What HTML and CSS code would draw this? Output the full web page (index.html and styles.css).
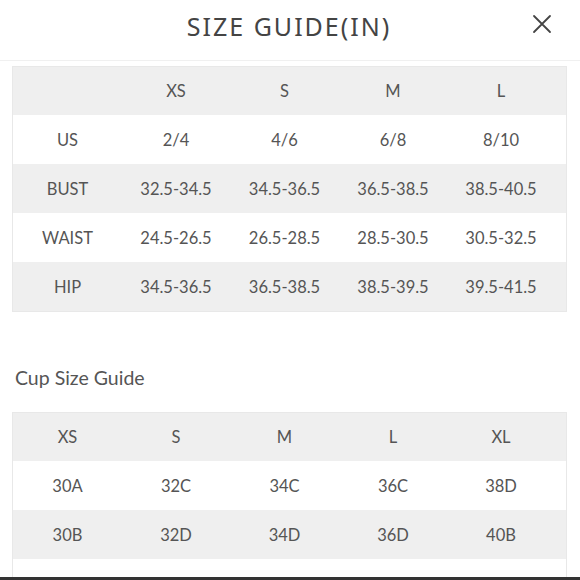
FILE: index.html
```html
<!DOCTYPE html>
<html>
<head>
<meta charset="utf-8">
<link rel="stylesheet" href="styles.css">
</head>
<body>
<div class="page">
  <header class="head">
    <h1 class="title">SIZE GUIDE(IN)</h1>
    <svg class="close" width="20" height="20" viewBox="0 0 20 20"><path d="M2 2 L18 18 M18 2 L2 18" stroke="#444" stroke-width="1.8" fill="none" stroke-linecap="round"/></svg>
  </header>
  <div class="content">
    <div class="tbl">
      <div class="row gray first"><span></span><span>XS</span><span>S</span><span>M</span><span>L</span></div>
      <div class="row"><span>US</span><span>2/4</span><span>4/6</span><span>6/8</span><span>8/10</span></div>
      <div class="row gray"><span>BUST</span><span>32.5-34.5</span><span>34.5-36.5</span><span>36.5-38.5</span><span>38.5-40.5</span></div>
      <div class="row"><span>WAIST</span><span>24.5-26.5</span><span>26.5-28.5</span><span>28.5-30.5</span><span>30.5-32.5</span></div>
      <div class="row gray"><span>HIP</span><span>34.5-36.5</span><span>36.5-38.5</span><span>38.5-39.5</span><span>39.5-41.5</span></div>
    </div>
    <h2 class="sub">Cup Size Guide</h2>
    <div class="tbl">
      <div class="row gray first"><span>XS</span><span>S</span><span>M</span><span>L</span><span>XL</span></div>
      <div class="row"><span>30A</span><span>32C</span><span>34C</span><span>36C</span><span>38D</span></div>
      <div class="row gray"><span>30B</span><span>32D</span><span>34D</span><span>36D</span><span>40B</span></div>
      <div class="row"><span>30C</span><span>34A</span><span>36A</span><span>38A</span><span>40C</span></div>
    </div>
  </div>
  <div class="bottombar"></div>
</div>
</body>
</html>
```
FILE: styles.css
```css
html, body {
  margin: 0;
  padding: 0;
  background: #fff;
}
body {
  font-family: "Lato", "Noto Sans", sans-serif;
  color: #555;
}
.page {
  width: 580px;
  height: 580px;
  position: relative;
  overflow: hidden;
}
.head {
  height: 60px;
  border-bottom: 1px solid #f0f0f0;
  display: flex;
  align-items: center;
  justify-content: center;
  position: relative;
}
.title {
  margin: 0;
  font-family: "Noto Sans", "Lato", sans-serif;
  font-weight: 400;
  font-size: 25px;
  letter-spacing: 2px;
  color: #444;
  padding-bottom: 9px;
  padding-right: 2px;
}
.close {
  position: absolute;
  right: 28px;
  top: 14px;
}
.content {
  padding: 5px 13px 0 12px;
}
.tbl {
  border: 1px solid #e8e8e8;
}
.row {
  display: grid;
  grid-template-columns: 109px 108px 109px 108px 1fr;
  height: 49px;
  align-items: center;
  font-size: 16.5px;
  background: #fff;
}
.row.first {
  height: 48px;
}
.row.gray {
  background: #efefef;
}
.row span {
  text-align: center;
}
.row span:last-child {
  padding-right: 11px;
}
.sub {
  margin: 0;
  font-weight: 400;
  font-size: 19.5px;
  color: #555;
  padding: 55px 0 23px 3px;
  line-height: 22px;
}
.bottombar {
  position: absolute;
  left: 0;
  right: 0;
  bottom: 0;
  height: 3px;
  background: #333;
}
```
